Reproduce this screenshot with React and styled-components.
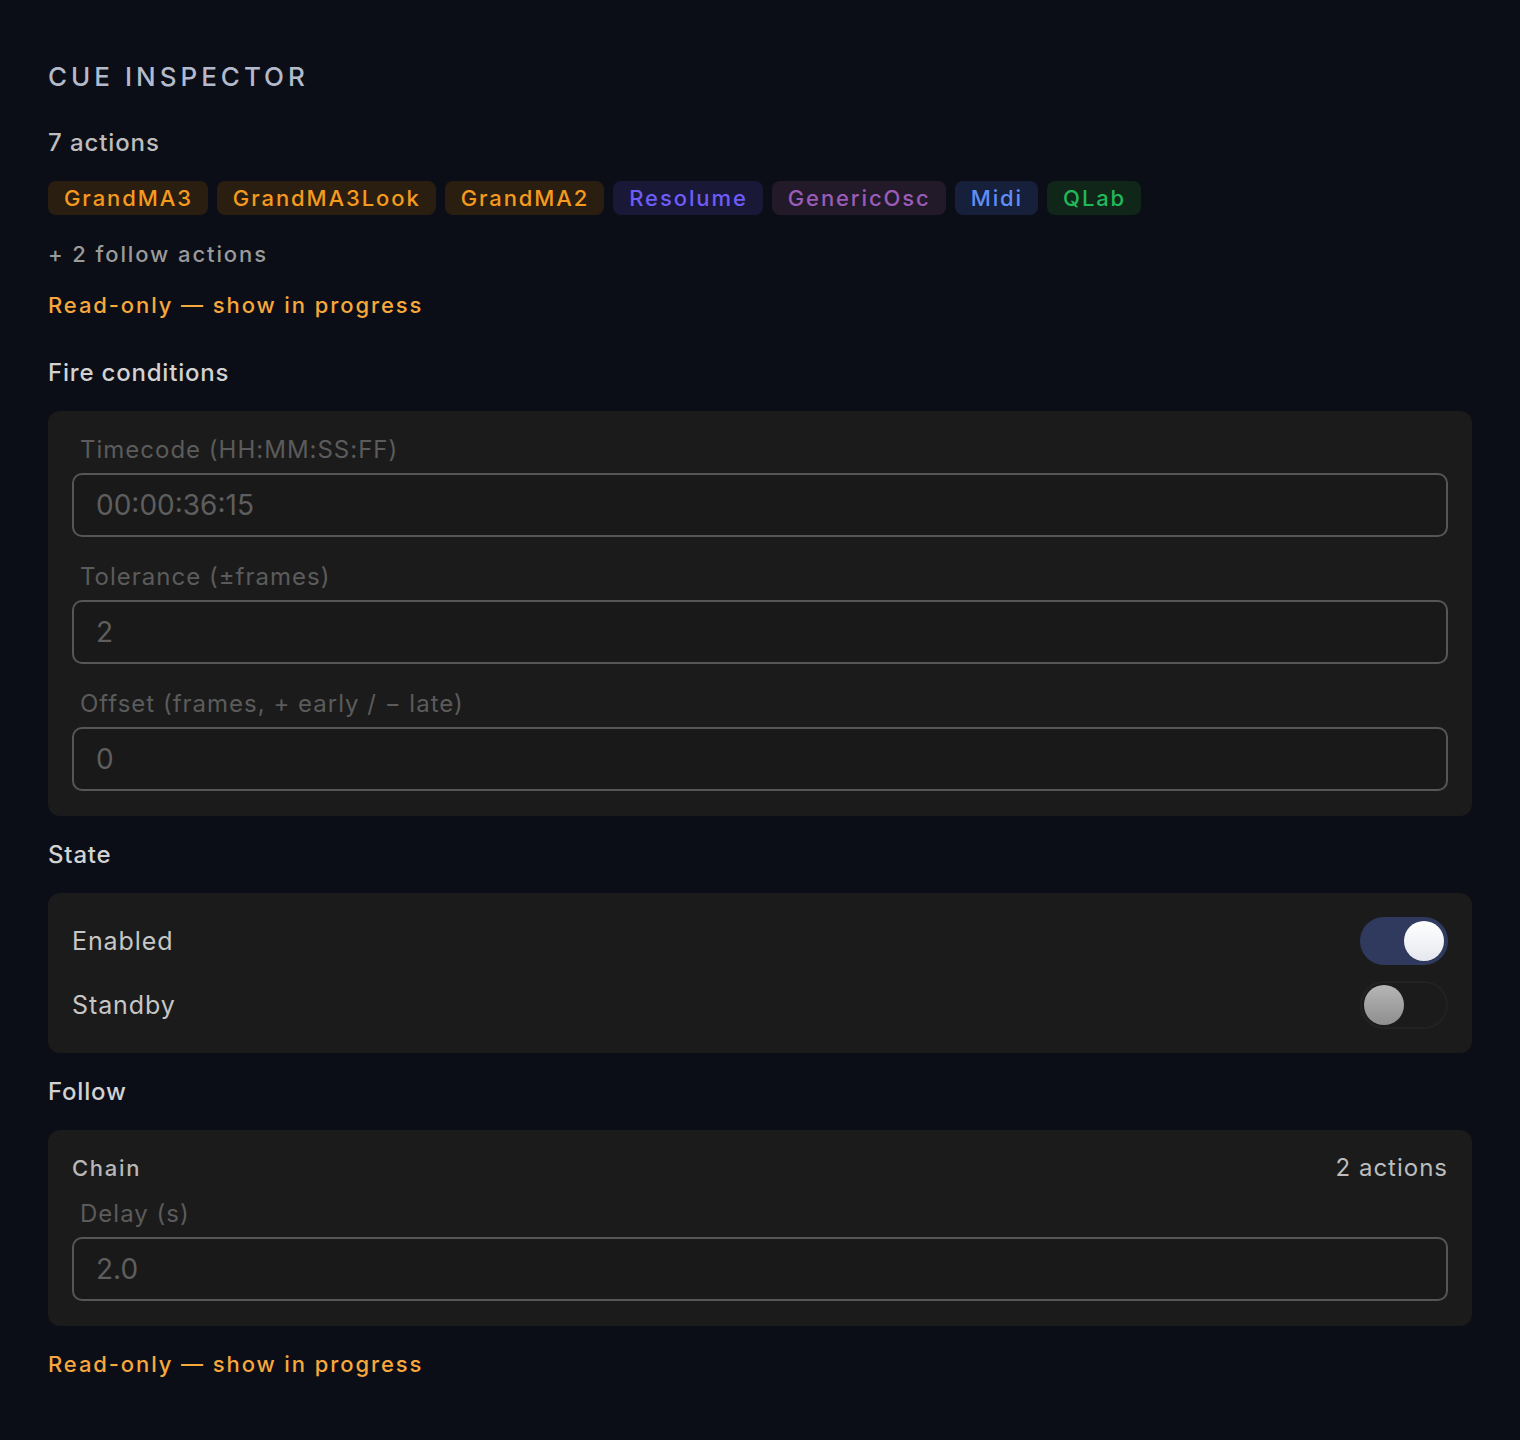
import React from "react"
import styled, { createGlobalStyle } from "styled-components"

const GlobalStyle = createGlobalStyle`
  html, body {
    margin: 0;
    background: #0b0e16;
  }
  body {
    font-family: Inter, "Noto Sans", "Liberation Sans", sans-serif;
    -webkit-font-smoothing: antialiased;
  }
`

// protocol colours for the action chips
const TAG_COLORS = {
  orange: { bg: "#2a1e10", fg: "#f59a1e" },
  violet: { bg: "#1a1837", fg: "#6d5cf7" },
  purple: { bg: "#221a29", fg: "#9b5cb8" },
  blue: { bg: "#16203a", fg: "#5f8ef5" },
  green: { bg: "#0f2619", fg: "#22b85a" },
}

const ACTIONS = [
  { name: "GrandMA3", tone: "orange" },
  { name: "GrandMA3Look", tone: "orange" },
  { name: "GrandMA2", tone: "orange" },
  { name: "Resolume", tone: "violet" },
  { name: "GenericOsc", tone: "purple" },
  { name: "Midi", tone: "blue" },
  { name: "QLab", tone: "green" },
]

const Page = styled.div`
  min-height: 1440px;
  box-sizing: border-box;
  padding: 61px 48px 40px;
  display: flex;
  flex-direction: column;
`

const Title = styled.h1`
  margin: 0;
  font-size: 26px;
  line-height: 32px;
  font-weight: 500;
  letter-spacing: 4px;
  color: #b3bacb;
`

const Count = styled.div`
  margin-top: 34px;
  font-size: 24px;
  line-height: 32px;
  font-weight: 500;
  letter-spacing: 0.9px;
  color: #bdbdbd;
`

const TagRow = styled.div`
  margin-top: 22px;
  display: flex;
  gap: 9px;
`

const Tag = styled.span`
  height: 34px;
  display: inline-flex;
  align-items: center;
  padding: 0 15px 0 16px;
  border-radius: 8px;
  font-size: 22px;
  font-weight: 500;
  letter-spacing: 1.9px;
  background: ${p => TAG_COLORS[p.$tone].bg};
  color: ${p => TAG_COLORS[p.$tone].fg};
`

const FollowNote = styled.div`
  margin-top: 23px;
  font-size: 22px;
  line-height: 32px;
  font-weight: 500;
  letter-spacing: 1.9px;
  color: #9a9a9a;
`

const ReadOnly = styled.div`
  margin-top: ${p => p.$top}px;
  font-size: 22px;
  line-height: 32px;
  font-weight: 500;
  letter-spacing: 1.9px;
  color: #f7a83c;
`

const SectionTitle = styled.h2`
  margin: ${p => p.$top}px 0 0;
  font-size: 24px;
  line-height: 32px;
  font-weight: 500;
  letter-spacing: 0.8px;
  color: #d2d2d2;
`

const Panel = styled.section`
  margin-top: 22px;
  padding: ${p => p.$padTop || 24}px 24px ${p => p.$padBottom || 24}px;
  border-radius: 12px;
  background: #1b1b1b;
  display: flex;
  flex-direction: column;
  gap: ${p => p.$gap || 0}px;
`

const Field = styled.label`
  display: flex;
  flex-direction: column;
  gap: 8px;
  & + & {
    margin-top: 24px;
  }
`

const FieldLabel = styled.span`
  padding-left: 8px;
  font-size: 24px;
  line-height: 31px;
  letter-spacing: 1px;
  color: #5b5b5b;
`

const Input = styled.input`
  box-sizing: border-box;
  height: 64px;
  width: 100%;
  padding: 0 22px;
  border: 2px solid #565656;
  border-radius: 10px;
  background: #191919;
  font-family: inherit;
  font-size: 28px;
  color: #5e5e5e;
  outline: none;
  &:disabled {
    color: #5e5e5e;
    -webkit-text-fill-color: #5e5e5e;
    opacity: 1;
  }
`

const ToggleRow = styled.div`
  display: flex;
  align-items: center;
  justify-content: space-between;
  font-size: 25px;
  font-weight: 400;
  letter-spacing: 0.9px;
  color: #c6c6c6;
`

const Track = styled.div`
  box-sizing: border-box;
  width: 88px;
  height: 48px;
  padding: 2px;
  border-radius: 24px;
  display: flex;
  justify-content: ${p => (p.$on ? "flex-end" : "flex-start")};
  background: ${p => (p.$on ? "#2f3a5e" : "#1b1b1b")};
  border: 2px solid ${p => (p.$on ? "#2f3a5e" : "#222222")};
`

const Knob = styled.div`
  width: 40px;
  height: 40px;
  border-radius: 50%;
  background: ${p =>
    p.$on
      ? "linear-gradient(#ffffff, #e6e8ee)"
      : "linear-gradient(#b6b6b6, #8e8e8e)"};
`

const ChainHead = styled.div`
  display: flex;
  align-items: center;
  justify-content: space-between;
  line-height: 28px;
  margin-bottom: 16px;
`

const ChainName = styled.span`
  font-size: 22px;
  font-weight: 500;
  letter-spacing: 1.7px;
  color: #b8b8b8;
`

const ChainCount = styled.span`
  font-size: 24px;
  letter-spacing: 1px;
  color: #bdbdbd;
`

const Toggle = ({ on }) => (
  <Track $on={on}>
    <Knob $on={on} />
  </Track>
)

export default function App() {
  return (
    <>
      <GlobalStyle />
      <Page>
        <Title>CUE INSPECTOR</Title>
        <Count>7 actions</Count>
        <TagRow>
          {ACTIONS.map(a => (
            <Tag key={a.name} $tone={a.tone}>
              {a.name}
            </Tag>
          ))}
        </TagRow>
        <FollowNote>+ 2 follow actions</FollowNote>
        <ReadOnly $top={19}>Read-only — show in progress</ReadOnly>

        <SectionTitle $top={36}>Fire conditions</SectionTitle>
        <Panel $padTop={23} $padBottom={25}>
          <Field>
            <FieldLabel>Timecode (HH:MM:SS:FF)</FieldLabel>
            <Input disabled value="00:00:36:15" readOnly />
          </Field>
          <Field>
            <FieldLabel>Tolerance (±frames)</FieldLabel>
            <Input disabled value="2" readOnly />
          </Field>
          <Field>
            <FieldLabel>Offset (frames, + early / − late)</FieldLabel>
            <Input disabled value="0" readOnly />
          </Field>
        </Panel>

        <SectionTitle $top={23}>State</SectionTitle>
        <Panel $gap={16}>
          <ToggleRow>
            Enabled
            <Toggle on />
          </ToggleRow>
          <ToggleRow>
            Standby
            <Toggle />
          </ToggleRow>
        </Panel>

        <SectionTitle $top={23}>Follow</SectionTitle>
        <Panel $padBottom={25}>
          <ChainHead>
            <ChainName>Chain</ChainName>
            <ChainCount>2 actions</ChainCount>
          </ChainHead>
          <Field>
            <FieldLabel>Delay (s)</FieldLabel>
            <Input disabled value="2.0" readOnly />
          </Field>
        </Panel>

        <ReadOnly $top={22}>Read-only — show in progress</ReadOnly>
      </Page>
    </>
  )
}
